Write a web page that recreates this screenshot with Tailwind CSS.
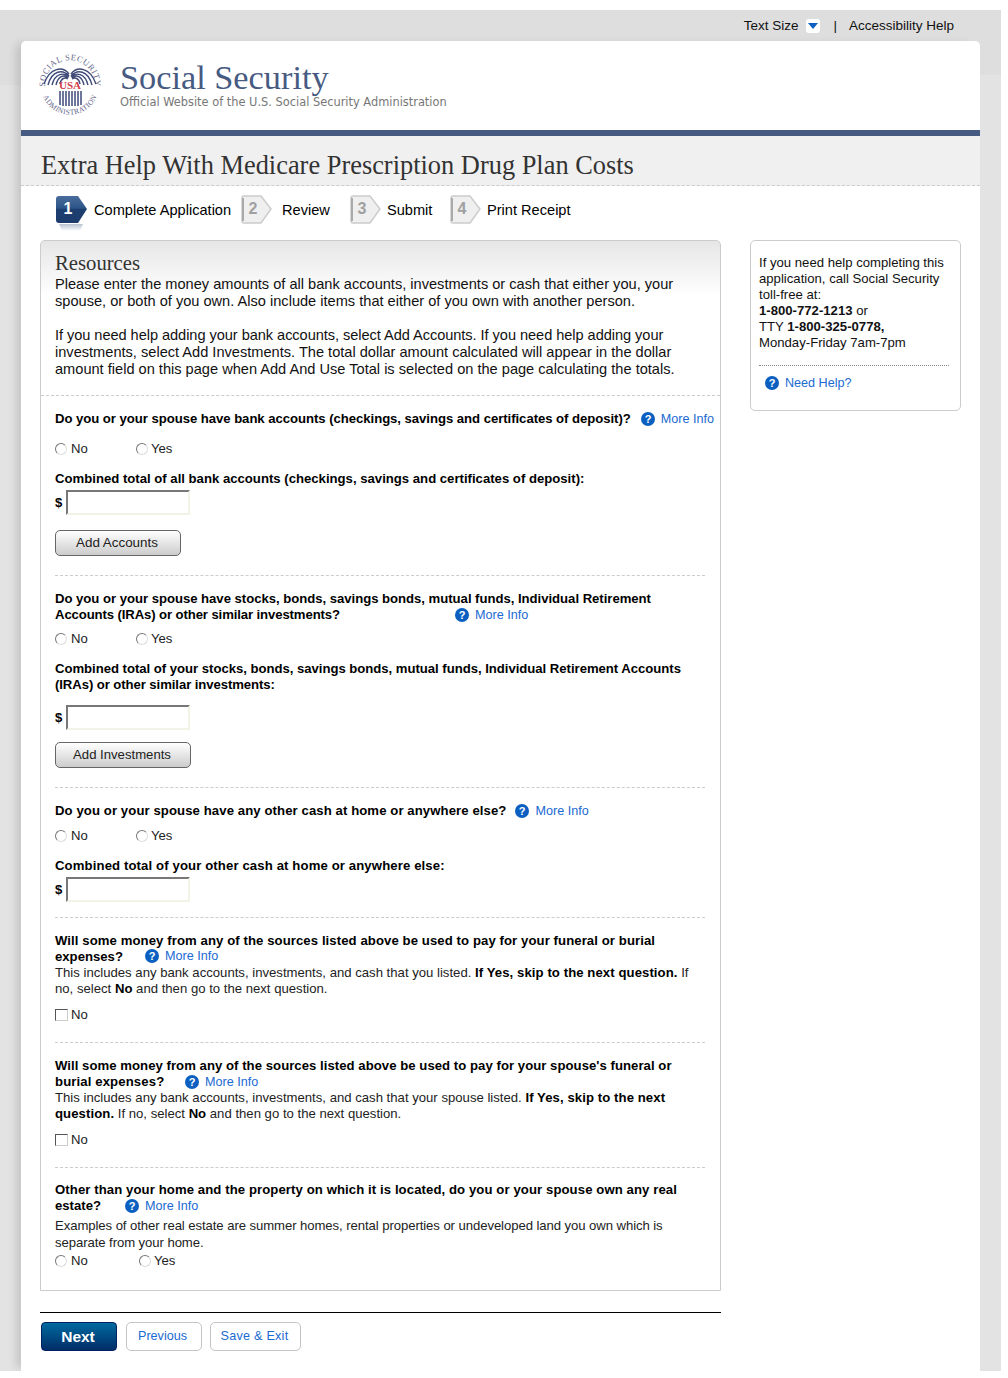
<!DOCTYPE html>
<html lang="en">
<head>
  <meta charset="UTF-8" />
  <title>Extra Help With Medicare Prescription Drug Plan Costs</title>
  <script src="https://cdn.jsdelivr.net/npm/@tailwindcss/browser@4"></script>
</head>
<body class="bg-white font-['Liberation_Sans',Arial,sans-serif] text-[13.15px] text-black">
<div class="mt-[10px] w-[1001px] h-[1361px] overflow-hidden bg-[#e3e3e3] bg-[linear-gradient(#dedede,#dedede),linear-gradient(#dedede,#dedede)] bg-no-repeat bg-[length:100%_65px,21px_75px]">
  <!-- top links -->
  <div class="h-[31px] flex items-center justify-end pr-[47px] pt-[1px] text-[13.5px] text-[#111]">
    <span>Text Size</span>
    <span class="ml-[8px] w-[14px] h-[14px] rounded-[3px] bg-white flex items-center justify-center"><svg width="10" height="6" viewBox="0 0 10 6"><path d="M0 0h10L5 6z" fill="#0a5fc0"/></svg></span>
    <span class="ml-[13px]">|</span>
    <span class="ml-[12px]">Accessibility Help</span>
  </div>

  <!-- page card -->
  <div class="ml-[21px] w-[959px] h-[1330px] bg-white rounded-t-[5px] shadow-[-8px_0_8px_-3px_rgba(0,0,0,0.13)]">
    <header class="h-[89px] flex">
      <svg class="ml-[17px] mt-[12px] overflow-visible" width="66" height="66" viewBox="0 0 66 66">
        <defs>
          <path id="sealTop" d="M7.3 36A25 25 0 1 1 56.7 36"/>
          <path id="sealBottom" d="M3.5 38A29 29 0 0 0 60.5 38"/>
        </defs>
        <text font-family="Liberation Serif" font-size="8.5" fill="#5f6488" letter-spacing="0.5" text-anchor="middle"><textPath href="#sealTop" startOffset="50%">SOCIAL SECURITY</textPath></text>
        <text font-family="Liberation Serif" font-size="7.5" fill="#5f6488" letter-spacing="0.3" text-anchor="middle"><textPath href="#sealBottom" startOffset="50%">ADMINISTRATION</textPath></text>
        <path d="M31 21C25 13 12 14 6 31M31 23C25 16 14 17 10 32M31 24C26 19 17 20 14 32M30 25C26 21 20 23 18 32M30 26C27 24 23 25 22 31M33 21C39 13 52 14 58 31M33 23C39 16 50 17 54 32M33 24C38 19 47 20 50 32M34 25C38 21 44 23 46 32M34 26C37 24 41 25 42 31" stroke="#3f4a78" stroke-width="1.4" fill="none"/>
        <text x="32" y="36" text-anchor="middle" font-family="Liberation Serif" font-weight="700" font-size="11" fill="#d2404a">USA</text>
        <path d="M22 38v14M25 38v15M28 38v15M31 38v15M34 38v15M37 38v15M40 38v15M43 38v14" stroke="#3f4a78" stroke-width="1.5"/>
      </svg>
      <div class="ml-[16px] pt-[17px]">
        <div class="font-['Liberation_Serif',serif] text-[34.3px] leading-[38px] text-[#475a82]">Social Security</div>
        <div class="font-['DejaVu_Sans',sans-serif] text-[11.4px] leading-[13px] text-[#777777]">Official Website of the U.S. Social Security Administration</div>
      </div>
    </header>
    <div class="h-[6px] bg-[#475a82]"></div>
    <div class="h-[50px] bg-[#f0f0f0] border-b border-dashed border-[#cccccc] pl-[20px] pt-[14px] font-['Liberation_Serif',serif] text-[26.4px] leading-[31px] text-[#333333]">Extra Help With Medicare Prescription Drug Plan Costs</div>

    <!-- steps -->
    <div class="h-[54px] pt-[9px] pl-[35px] flex text-[14.6px] leading-[30px] whitespace-nowrap">
      <svg width="32" height="37" viewBox="0 0 32 37">
        <defs><linearGradient id="stepBlue" x1="0" y1="0" x2="0" y2="1"><stop offset="0" stop-color="#4a6d9c"/><stop offset="0.45" stop-color="#2b5488"/><stop offset="0.5" stop-color="#1d3f70"/><stop offset="1" stop-color="#1c3c6c"/></linearGradient><linearGradient id="stepShade" x1="0" y1="0" x2="0" y2="1"><stop offset="0" stop-color="#b8c2d0"/><stop offset="1" stop-color="#ffffff"/></linearGradient></defs>
        <path d="M3 29L6 36H24L27 29Z" fill="url(#stepShade)"/>
        <path d="M3 1H22L31 14L22 28H3Q0 28 0 25V4Q0 1 3 1Z" fill="url(#stepBlue)"/>
        <text x="12" y="19" text-anchor="middle" font-family="Liberation Sans" font-weight="700" font-size="16" fill="#fff">1</text>
      </svg>
      <span class="ml-[6px] w-[147px]">Complete Application</span>
      <svg width="31" height="30" viewBox="0 0 31 30"><path d="M3 1H20L30 14L20 28H3Q1 28 1 26V3Q1 1 3 1Z" fill="#efefef" stroke="#cccccc" stroke-width="1.5"/><path d="M2 3V26" stroke="#aaaaaa" stroke-width="2"/><text x="12" y="19" text-anchor="middle" font-family="Liberation Sans" font-weight="700" font-size="16" fill="#a0a0a0">2</text></svg>
      <span class="ml-[10px] w-[68px]">Review</span>
      <svg width="31" height="30" viewBox="0 0 31 30"><path d="M3 1H20L30 14L20 28H3Q1 28 1 26V3Q1 1 3 1Z" fill="#efefef" stroke="#cccccc" stroke-width="1.5"/><path d="M2 3V26" stroke="#aaaaaa" stroke-width="2"/><text x="12" y="19" text-anchor="middle" font-family="Liberation Sans" font-weight="700" font-size="16" fill="#a0a0a0">3</text></svg>
      <span class="ml-[6px] w-[63px]">Submit</span>
      <svg width="31" height="30" viewBox="0 0 31 30"><path d="M3 1H20L30 14L20 28H3Q1 28 1 26V3Q1 1 3 1Z" fill="#efefef" stroke="#cccccc" stroke-width="1.5"/><path d="M2 3V26" stroke="#aaaaaa" stroke-width="2"/><text x="12" y="19" text-anchor="middle" font-family="Liberation Sans" font-weight="700" font-size="16" fill="#a0a0a0">4</text></svg>
      <span class="ml-[6px]">Print Receipt</span>
    </div>

    <div class="flex pl-[19px]">
      <div class="w-[681px]">
        <main class="h-[1051px] border border-[#cccccc] rounded-t-[5px] bg-[linear-gradient(#e6e6e6,#ffffff)] bg-no-repeat bg-[length:100%_55px]">
          <section class="h-[155px] border-b border-dashed border-[#cccccc] pl-[14px] pr-[20px] pt-[11px] text-[14.6px] leading-[17px] text-[#111]">
            <h2 class="font-['Liberation_Serif',serif] text-[20.7px] leading-[22px] text-[#333333]">Resources</h2>
            <p class="mt-[2px]">Please enter the money amounts of all bank accounts, investments or cash that either you, your spouse, or both of you own. Also include items that either of you own with another person.</p>
            <p class="mt-[17px]"><span class="tracking-[-0.055px]">If you need help adding your bank accounts, select Add Accounts. If you need help adding your</span> investments, select Add Investments. The total dollar amount calculated will appear in the dollar amount field on this page when Add And Use Total is selected on the page calculating the totals.</p>
          </section>

          <div class="pl-[14px] pr-[15px]">
            <!-- bank accounts -->
            <section class="h-[180px] border-b border-dashed border-[#cccccc] pt-[15px] leading-[16px]">
              <div class="flex font-bold whitespace-nowrap"><span class="tracking-[-0.045px]">Do you or your spouse have bank accounts (checkings, savings and certificates of deposit)?</span>
                <span class="ml-[10px] -mt-[1px] inline-flex items-center font-normal text-[12.6px] text-[#1a6ad2]"><svg class="mr-[6px]" width="14" height="14" viewBox="0 0 14 14"><circle cx="7" cy="7" r="7" fill="#0a5fc0"/><text x="7" y="11" text-anchor="middle" font-family="Liberation Sans" font-weight="700" font-size="11" fill="#fff">?</text></svg>More Info</span></div>
              <div class="mt-[14px] flex items-center text-[#222]">
                <input type="radio" class="appearance-none w-[12px] h-[12px] rounded-full border border-t-[#777777] border-l-[#777777] border-r-[#dddddd] border-b-[#dddddd]" /><span class="ml-[4px] w-[65px]">No</span>
                <input type="radio" class="appearance-none w-[12px] h-[12px] rounded-full border border-t-[#777777] border-l-[#777777] border-r-[#dddddd] border-b-[#dddddd]" /><span class="ml-[3px]">Yes</span>
              </div>
              <div class="mt-[14px] font-bold">Combined total of all bank accounts (checkings, savings and certificates of deposit):</div>
              <div class="mt-[3px] flex items-center font-bold"><span class="w-[11px]">$</span><input type="text" class="w-[124px] h-[25px] border-2 border-t-[#777777] border-l-[#777777] border-r-[#f2f2e6] border-b-[#f2f2e6] bg-white" /></div>
              <button class="mt-[15px] pr-[2px] w-[126px] h-[26px] rounded-[5px] border border-[#666666] bg-[linear-gradient(#ffffff,#cccccc)] text-[13.4px] text-[#222]">Add Accounts</button>
            </section>

            <!-- investments -->
            <section class="h-[212px] border-b border-dashed border-[#cccccc] pt-[15px] leading-[16px]">
              <div class="font-bold whitespace-nowrap tracking-[-0.03px]">Do you or your spouse have stocks, bonds, savings bonds, mutual funds, Individual Retirement</div>
              <div class="flex font-bold"><span class="w-[400px] tracking-[-0.11px]">Accounts (IRAs) or other similar investments?</span>
                <span class="-mt-[1px] inline-flex items-center font-normal text-[12.6px] tracking-normal text-[#1a6ad2]"><svg class="mr-[6px]" width="14" height="14" viewBox="0 0 14 14"><circle cx="7" cy="7" r="7" fill="#0a5fc0"/><text x="7" y="11" text-anchor="middle" font-family="Liberation Sans" font-weight="700" font-size="11" fill="#fff">?</text></svg>More Info</span></div>
              <div class="mt-[8px] flex items-center text-[#222]">
                <input type="radio" class="appearance-none w-[12px] h-[12px] rounded-full border border-t-[#777777] border-l-[#777777] border-r-[#dddddd] border-b-[#dddddd]" /><span class="ml-[4px] w-[65px]">No</span>
                <input type="radio" class="appearance-none w-[12px] h-[12px] rounded-full border border-t-[#777777] border-l-[#777777] border-r-[#dddddd] border-b-[#dddddd]" /><span class="ml-[3px]">Yes</span>
              </div>
              <div class="mt-[14px] font-bold whitespace-nowrap"><span class="tracking-[-0.03px]">Combined total of your stocks, bonds, savings bonds, mutual funds, Individual Retirement Accounts</span><br /><span class="tracking-[-0.08px]">(IRAs) or other similar investments:</span></div>
              <div class="mt-[12px] flex items-center font-bold"><span class="w-[11px]">$</span><input type="text" class="w-[124px] h-[25px] border-2 border-t-[#777777] border-l-[#777777] border-r-[#f2f2e6] border-b-[#f2f2e6] bg-white" /></div>
              <button class="mt-[12px] pr-[2px] w-[136px] h-[26px] rounded-[5px] border border-[#666666] bg-[linear-gradient(#ffffff,#cccccc)] text-[#222]">Add Investments</button>
            </section>

            <!-- cash -->
            <section class="h-[130px] border-b border-dashed border-[#cccccc] pt-[15px] leading-[16px]">
              <div class="flex font-bold whitespace-nowrap"><span class="tracking-[0.09px]">Do you or your spouse have any other cash at home or anywhere else?</span>
                <span class="ml-[9px] -mt-[1px] inline-flex items-center font-normal text-[12.6px] text-[#1a6ad2]"><svg class="mr-[6px]" width="14" height="14" viewBox="0 0 14 14"><circle cx="7" cy="7" r="7" fill="#0a5fc0"/><text x="7" y="11" text-anchor="middle" font-family="Liberation Sans" font-weight="700" font-size="11" fill="#fff">?</text></svg>More Info</span></div>
              <div class="mt-[9px] flex items-center text-[#222]">
                <input type="radio" class="appearance-none w-[12px] h-[12px] rounded-full border border-t-[#777777] border-l-[#777777] border-r-[#dddddd] border-b-[#dddddd]" /><span class="ml-[4px] w-[65px]">No</span>
                <input type="radio" class="appearance-none w-[12px] h-[12px] rounded-full border border-t-[#777777] border-l-[#777777] border-r-[#dddddd] border-b-[#dddddd]" /><span class="ml-[3px]">Yes</span>
              </div>
              <div class="mt-[14px] font-bold tracking-[0.12px]">Combined total of your other cash at home or anywhere else:</div>
              <div class="mt-[3px] flex items-center font-bold"><span class="w-[11px]">$</span><input type="text" class="w-[124px] h-[25px] border-2 border-t-[#777777] border-l-[#777777] border-r-[#f2f2e6] border-b-[#f2f2e6] bg-white" /></div>
            </section>

            <!-- funeral -->
            <section class="h-[125px] border-b border-dashed border-[#cccccc] pt-[15px] leading-[16px]">
              <div class="font-bold whitespace-nowrap tracking-[0.085px]">Will some money from any of the sources listed above be used to pay for your funeral or burial</div>
              <div class="flex"><b class="w-[90px]">expenses?</b>
                <span class="-mt-[2px] inline-flex items-center text-[12.6px] text-[#1a6ad2]"><svg class="mr-[6px]" width="14" height="14" viewBox="0 0 14 14"><circle cx="7" cy="7" r="7" fill="#0a5fc0"/><text x="7" y="11" text-anchor="middle" font-family="Liberation Sans" font-weight="700" font-size="11" fill="#fff">?</text></svg>More Info</span></div>
              <p class="text-[#222] whitespace-nowrap">This includes any bank accounts, investments, and cash that you listed. <b class="text-black tracking-[0.08px]">If Yes, skip to the next question.</b> If<br />no, select <b class="text-black">No</b> and then go to the next question.</p>
              <div class="mt-[10px] flex items-center text-[#222]">
                <input type="checkbox" class="appearance-none w-[13px] h-[12px] border border-t-[#555555] border-l-[#555555] border-r-[#cccccc] border-b-[#cccccc]" /><span class="ml-[3px]">No</span>
              </div>
            </section>

            <!-- spouse funeral -->
            <section class="h-[125px] border-b border-dashed border-[#cccccc] pt-[15px] leading-[16px]">
              <div class="font-bold whitespace-nowrap tracking-[0.04px]">Will some money from any of the sources listed above be used to pay for your spouse's funeral or</div>
              <div class="flex"><b class="w-[130px] tracking-[0.12px]">burial expenses?</b>
                <span class="-mt-[1px] inline-flex items-center text-[12.6px] text-[#1a6ad2]"><svg class="mr-[6px]" width="14" height="14" viewBox="0 0 14 14"><circle cx="7" cy="7" r="7" fill="#0a5fc0"/><text x="7" y="11" text-anchor="middle" font-family="Liberation Sans" font-weight="700" font-size="11" fill="#fff">?</text></svg>More Info</span></div>
              <p class="text-[#222] whitespace-nowrap">This includes any bank accounts, investments, and cash that your spouse listed. <b class="text-black tracking-[0.08px]">If Yes, skip to the next<br />question.</b> If no, select <b class="text-black">No</b> and then go to the next question.</p>
              <div class="mt-[10px] flex items-center text-[#222]">
                <input type="checkbox" class="appearance-none w-[13px] h-[12px] border border-t-[#555555] border-l-[#555555] border-r-[#cccccc] border-b-[#cccccc]" /><span class="ml-[3px]">No</span>
              </div>
            </section>

            <!-- real estate -->
            <section class="pt-[14px] leading-[16px]">
              <div class="font-bold whitespace-nowrap tracking-[0.09px]">Other than your home and the property on which it is located, do you or your spouse own any real</div>
              <div class="flex"><b class="w-[70px]">estate?</b>
                <span class="-mt-[1px] inline-flex items-center text-[12.6px] text-[#1a6ad2]"><svg class="mr-[6px]" width="14" height="14" viewBox="0 0 14 14"><circle cx="7" cy="7" r="7" fill="#0a5fc0"/><text x="7" y="11" text-anchor="middle" font-family="Liberation Sans" font-weight="700" font-size="11" fill="#fff">?</text></svg>More Info</span></div>
              <p class="mt-[3px] leading-[17px] text-[#222] whitespace-nowrap tracking-[-0.08px]">Examples of other real estate are summer homes, rental properties or undeveloped land you own which is<br />separate from your home.</p>
              <div class="mt-[2px] flex items-center text-[#222]">
                <input type="radio" class="appearance-none w-[12px] h-[12px] rounded-full border border-t-[#777777] border-l-[#777777] border-r-[#dddddd] border-b-[#dddddd]" /><span class="ml-[4px] w-[68px]">No</span>
                <input type="radio" class="appearance-none w-[12px] h-[12px] rounded-full border border-t-[#777777] border-l-[#777777] border-r-[#dddddd] border-b-[#dddddd]" /><span class="ml-[3px]">Yes</span>
              </div>
            </section>
          </div>
        </main>

        <div class="mt-[21px] border-t border-black pt-[9px] pl-[1px] flex">
          <button class="pr-[2px] w-[76px] h-[29px] rounded-[4px] border border-[#00205f] bg-[linear-gradient(#006aa0,#002c66)] text-white font-bold text-[15.5px]">Next</button>
          <button class="ml-[9px] pr-[3px] w-[76px] h-[29px] rounded-[5px] border border-[#c4c4c4] bg-white text-[12.6px] text-[#1a6ad2]">Previous</button>
          <button class="ml-[8px] pr-[2px] w-[91px] h-[29px] rounded-[5px] border border-[#c4c4c4] bg-white text-[12.6px] tracking-[0.25px] text-[#1a6ad2]">Save &amp; Exit</button>
        </div>
      </div>

      <aside class="ml-[29px] w-[211px] h-[171px] border border-[#cccccc] rounded-[5px] pl-[8px] pr-[11px] pt-[14px] leading-[16px] text-[#111]">
        <p>If you need help completing this application, call Social Security toll-free at:<br /><b>1-800-772-1213</b> or<br />TTY <b>1-800-325-0778,</b><br />Monday-Friday 7am-7pm</p>
        <div class="mt-[14px] border-t border-dotted border-[#888888]"></div>
        <div class="mt-[9px] ml-[6px] flex items-center text-[12.6px] text-[#1a6ad2]"><svg class="mr-[6px]" width="14" height="14" viewBox="0 0 14 14"><circle cx="7" cy="7" r="7" fill="#0a5fc0"/><text x="7" y="11" text-anchor="middle" font-family="Liberation Sans" font-weight="700" font-size="11" fill="#fff">?</text></svg>Need Help?</div>
      </aside>
    </div>
  </div>
</div>
</body>
</html>
